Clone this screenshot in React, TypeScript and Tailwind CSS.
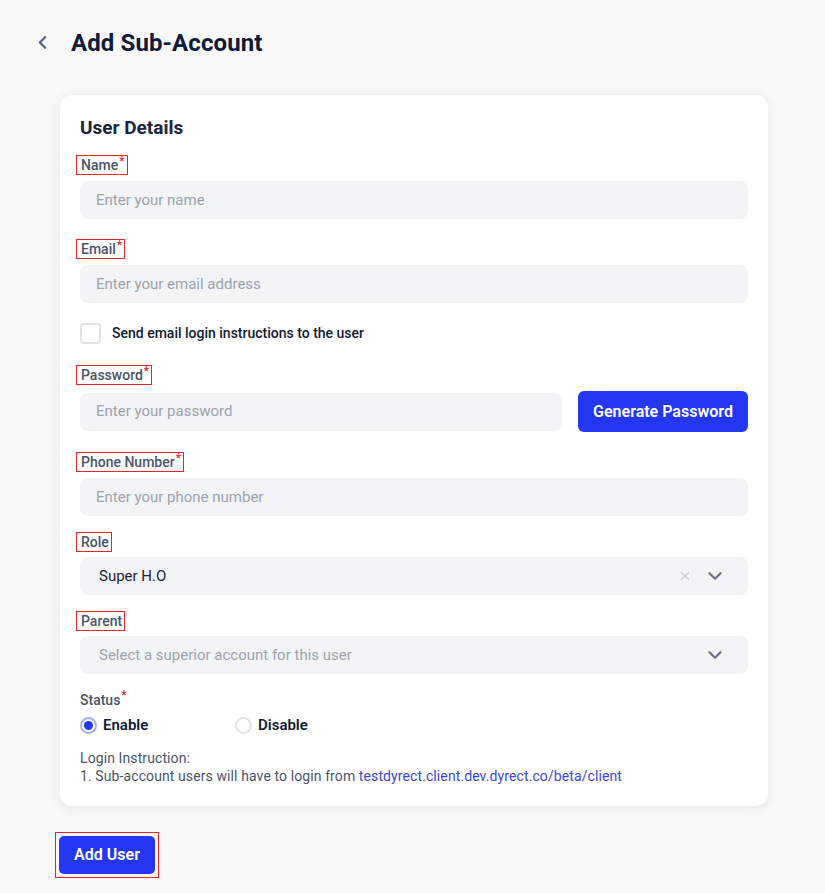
import { ChevronLeft, ChevronDown, X } from "lucide-react";

const Label = ({ text, required }: { text: string; required?: boolean }) => (
  <div className="flex">
    <span className="inline-flex border border-[#e8242b] pl-[4px] pr-[2px] h-[20px] items-center text-[14px] font-medium text-[#4a5567] -ml-[4px]">
      {text}
      {required && <span className="text-[#e8242b] text-[12px] -mt-[9px] ml-[1px]">*</span>}
    </span>
  </div>
);

const Input = ({ placeholder, className = "" }: { placeholder: string; className?: string }) => (
  <div
    className={`h-[38px] rounded-[8px] bg-[#f3f4f6] flex items-center pl-[16px] text-[15px] text-[#9ca3af] ${className}`}
  >
    {placeholder}
  </div>
);

export default function App() {
  return (
    <div
      className="min-h-[893px] w-full bg-[#f8f8f8] text-[#101a3a]"
      style={{ fontFamily: "Roboto, 'Noto Sans', sans-serif" }}
    >
      <div className="flex items-center pt-[27px] pl-[32px] h-[58px]">
        <ChevronLeft size={21} strokeWidth={2.8} className="text-[#5b6478]" />
        <h1 className="ml-[18px] text-[24px] font-bold text-[#0f1a3c] tracking-[0.1px]">Add Sub-Account</h1>
      </div>

      <div className="ml-[60px] mt-[37px] w-[708px] bg-white rounded-[12px] shadow-[0_2px_12px_rgba(0,0,0,0.08)] px-[20px] pt-[22px] pb-[21px]">
        <h2 className="text-[19px] font-bold text-[#1b2540] leading-[22px]">User Details</h2>

        <div className="mt-[16px]">
          <Label text="Name" required />
        </div>
        <Input placeholder="Enter your name" className="mt-[6px]" />

        <div className="mt-[20px]">
          <Label text="Email" required />
        </div>
        <Input placeholder="Enter your email address" className="mt-[6px]" />

        <div className="mt-[20px] flex items-center">
          <div className="w-[21px] h-[21px] rounded-[4px] border-2 border-[#dfe2e7] bg-white" />
          <span className="ml-[11px] text-[14px] font-medium text-[#111a33]">Send email login instructions to the user</span>
        </div>

        <div className="mt-[21px]">
          <Label text="Password" required />
        </div>
        <div className="mt-[6px] flex items-center gap-[16px]">
          <Input placeholder="Enter your password" className="flex-1" />
          <button className="h-[41px] w-[170px] rounded-[6px] bg-[#2337f4] text-white text-[16px] font-semibold">
            Generate Password
          </button>
        </div>

        <div className="mt-[20px]">
          <Label text="Phone Number" required />
        </div>
        <Input placeholder="Enter your phone number" className="mt-[6px]" />

        <div className="mt-[16px]">
          <Label text="Role" />
        </div>
        <div className="mt-[5px] h-[38px] rounded-[8px] bg-[#f3f4f6] flex items-center pl-[19px] pr-[22px]">
          <span className="flex-1 text-[15px] text-[#1b2235]">Super H.O</span>
          <X size={14} strokeWidth={2.2} className="text-[#c4c7cc]" />
          <ChevronDown size={22} strokeWidth={2.5} className="ml-[12px] text-[#6c7488]" />
        </div>

        <div className="mt-[16px]">
          <Label text="Parent" />
        </div>
        <div className="mt-[5px] h-[38px] rounded-[8px] bg-[#f3f4f6] flex items-center pl-[19px] pr-[22px]">
          <span className="flex-1 text-[15px] text-[#9ca3af]">Select a superior account for this user</span>
          <ChevronDown size={22} strokeWidth={2.5} className="text-[#6c7488]" />
        </div>

        <div className="mt-[16px] text-[14px] font-medium text-[#4a5567] flex">
          Status<span className="text-[#e8242b] text-[12px] -mt-[4px] ml-[1px]">*</span>
        </div>
        <div className="mt-[4px] flex items-center h-[20px]">
          <div className="flex items-center w-[155px]">
            <div className="w-[17px] h-[17px] rounded-full border-2 border-[#a9b0f7] flex items-center justify-center">
              <div className="w-[9px] h-[9px] rounded-full bg-[#2337f4]" />
            </div>
            <span className="ml-[6px] text-[15px] font-semibold text-[#111a33]">Enable</span>
          </div>
          <div className="flex items-center">
            <div className="w-[17px] h-[17px] rounded-full border-2 border-[#e1e3e7]" />
            <span className="ml-[6px] text-[15px] font-semibold text-[#111a33]">Disable</span>
          </div>
        </div>

        <div className="mt-[14px] text-[14px] text-[#4a5567] leading-[18px] tracking-[0.1px]">
          <div>Login Instruction:</div>
          <div>
            1. Sub-account users will have to login from{" "}
            <span className="text-[#3b45e6]">testdyrect.client.dev.dyrect.co/beta/client</span>
          </div>
        </div>
      </div>

      <div className="ml-[55px] mt-[26px] inline-flex border border-[#e8242b] p-[3px]">
        <button className="h-[38px] w-[96px] rounded-[5px] bg-[#2337f4] text-white text-[16px] font-semibold">
          Add User
        </button>
      </div>
    </div>
  );
}
